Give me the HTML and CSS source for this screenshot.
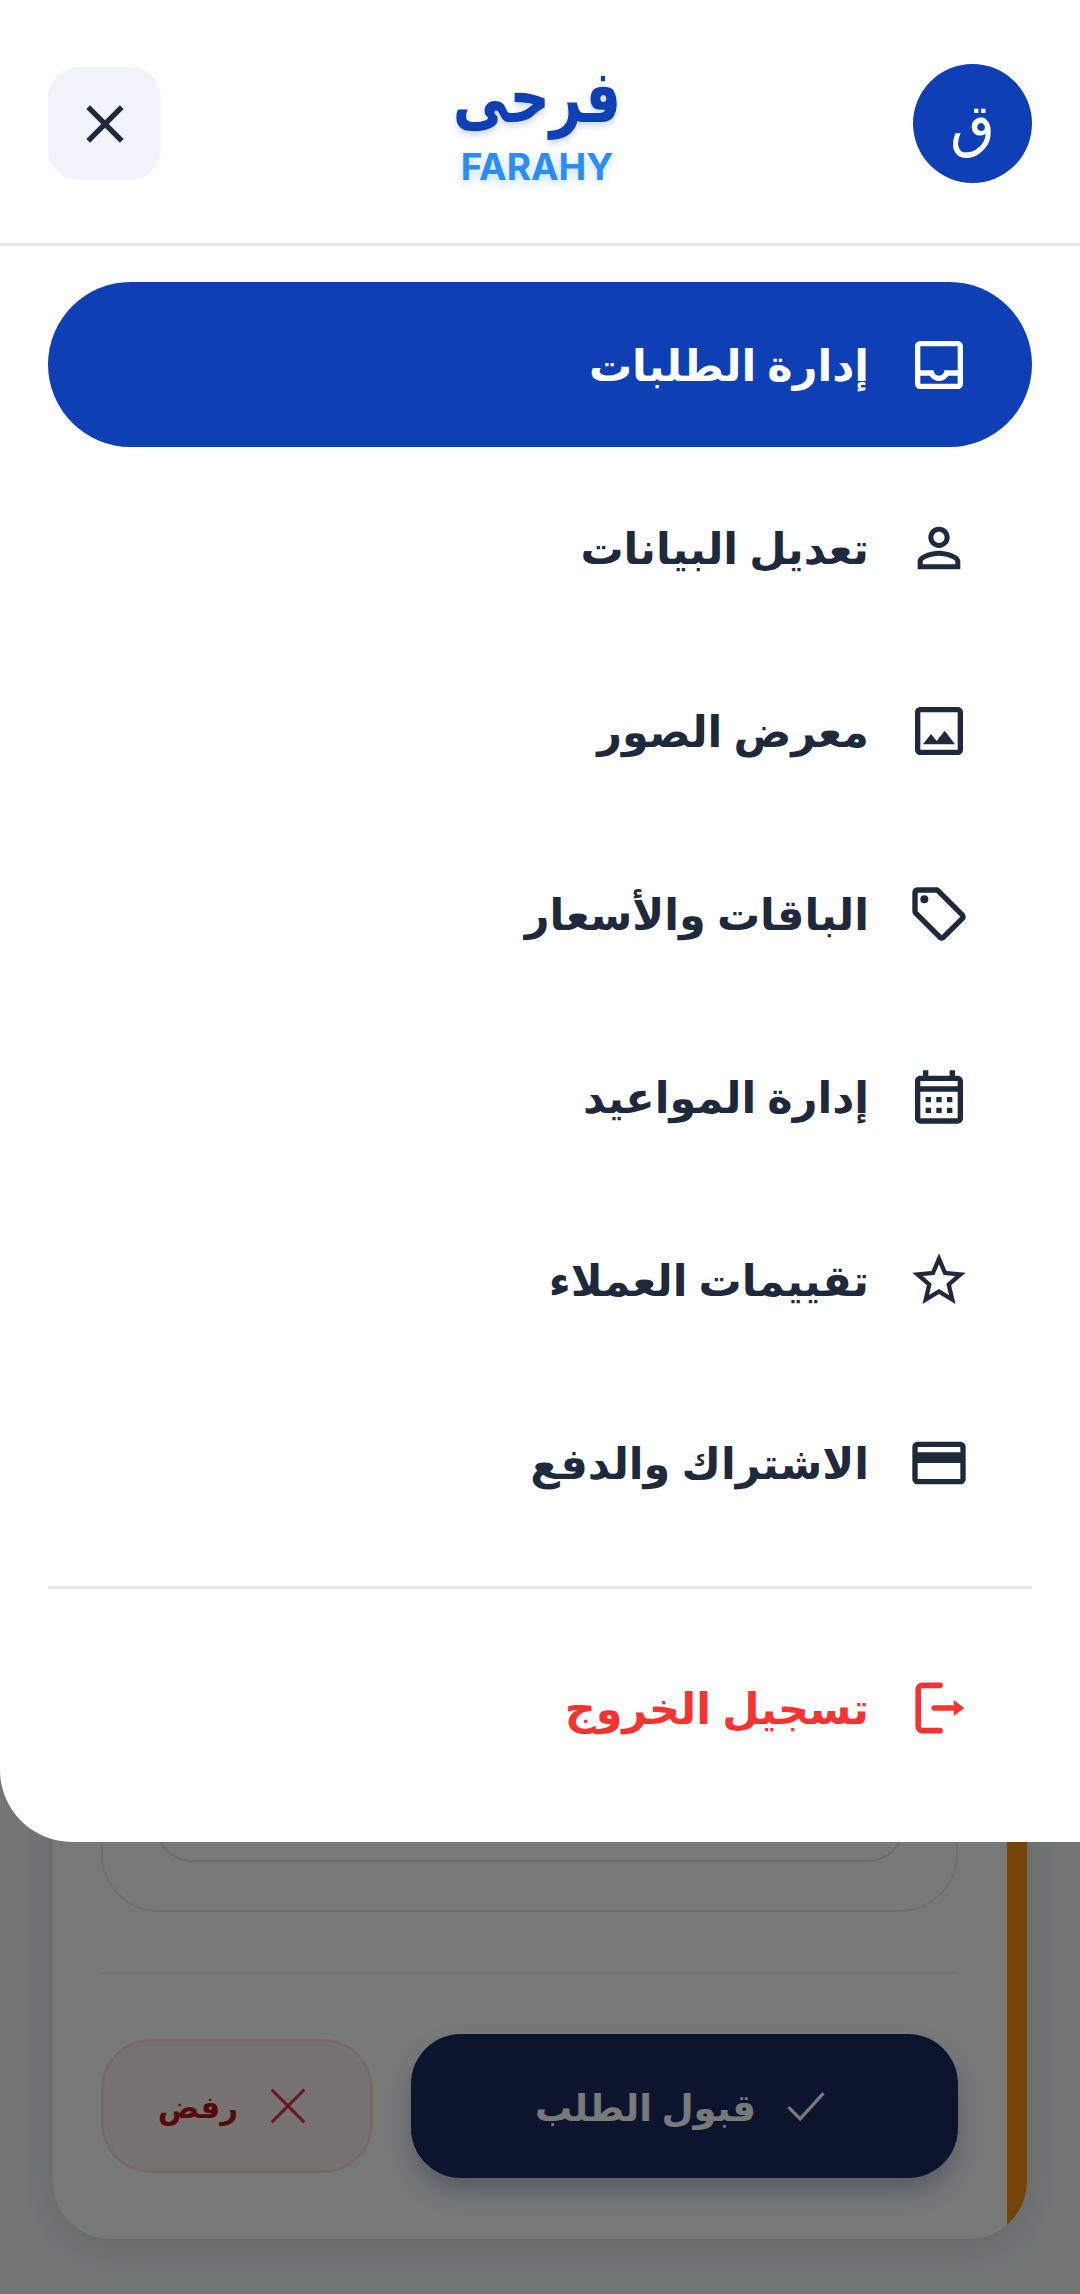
FILE: index.html
```html
<!DOCTYPE HTML>
<html lang="ar" dir="rtl">
<head>
  <title>فرحى</title>
  <meta content="text/html;charset=utf-8" http-equiv="Content-type"/>
  <meta name="viewport" content="width=device-width, initial-scale=1">
  <link rel="stylesheet" href="styles.css">
</head>
<body>
<!-- page behind the drawer -->
<main class="page">
  <section class="orderCard">
    <div class="cardStripe"></div>
    <div class="cardBody">
      <div class="detailsBox">
        <div class="detailsInner"></div>
      </div>
      <hr class="cardDivider">
      <div class="actions">
        <button class="acceptBtn">
          <svg class="btnIcon" viewBox="0 0 24 24"><path d="M4.5 12.5l5 5L19.5 6.5"/></svg>
          <span>قبول الطلب</span>
        </button>
        <button class="rejectBtn">
          <svg class="btnIcon" viewBox="0 0 24 24"><path d="M5 5l14 14M19 5L5 19"/></svg>
          <span>رفض</span>
        </button>
      </div>
    </div>
  </section>
</main>
<div class="backdrop"></div>

<!-- drawer -->
<nav class="drawer">
  <header class="drawerHead">
    <div class="avatar">ق</div>
    <div class="logo">
      <div class="logoAr">فرحى</div>
      <div class="logoEn">FARAHY</div>
    </div>
    <button class="closeBtn">
      <svg class="icon" viewBox="0 0 24 24"><path d="M19 6.41L17.59 5 12 10.59 6.41 5 5 6.41 10.59 12 5 17.59 6.41 19 12 13.41 17.59 19 19 17.59 13.41 12z"/></svg>
    </button>
  </header>
  <div class="menu">
    <a class="menuItem active">
      <svg class="icon" viewBox="0 0 24 24"><path d="M19 3H5c-1.1 0-2 .9-2 2v14c0 1.1.9 2 2 2h14c1.1 0 2-.9 2-2V5c0-1.1-.9-2-2-2zm0 16H5v-3h3.56c.69 1.19 1.97 2 3.45 2s2.75-.81 3.45-2H19v3zm0-5h-4.99c0 1.1-.9 2-2 2s-2-.9-2-2H5V5h14v9z"/></svg>
      <span>إدارة الطلبات</span>
    </a>
    <a class="menuItem">
      <svg class="icon" viewBox="0 0 24 24"><path d="M12 5.9c1.16 0 2.1.94 2.1 2.1s-.94 2.1-2.1 2.1S9.9 9.16 9.9 8s.94-2.1 2.1-2.1m0 9c2.97 0 6.1 1.46 6.1 2.1v1.1H5.9V17c0-.64 3.13-2.1 6.1-2.1M12 4C9.79 4 8 5.79 8 8s1.79 4 4 4 4-1.79 4-4-1.79-4-4-4zm0 9c-2.67 0-8 1.34-8 4v3h16v-3c0-2.66-5.33-4-8-4z"/></svg>
      <span>تعديل البيانات</span>
    </a>
    <a class="menuItem">
      <svg class="icon" viewBox="0 0 24 24"><path d="M19 5v14H5V5h14m0-2H5c-1.1 0-2 .9-2 2v14c0 1.1.9 2 2 2h14c1.1 0 2-.9 2-2V5c0-1.1-.9-2-2-2zm-4.86 8.86l-3 3.87L9 13.14 6 17h12l-3.86-5.14z"/></svg>
      <span>معرض الصور</span>
    </a>
    <a class="menuItem">
      <svg class="icon" viewBox="0 0 24 24"><path d="M21.41 11.58l-9-9C12.05 2.22 11.55 2 11 2H4c-1.1 0-2 .9-2 2v7c0 .55.22 1.05.59 1.42l9 9c.36.36.86.58 1.41.58s1.05-.22 1.41-.59l7-7c.37-.36.59-.86.59-1.41s-.23-1.06-.59-1.42zM13 20.01L4 11V4h7v-.01l9 9-7 7.02z"/><circle cx="6.5" cy="6.5" r="1.5"/></svg>
      <span>الباقات والأسعار</span>
    </a>
    <a class="menuItem">
      <svg class="icon" viewBox="0 0 24 24"><path d="M19 4h-1V2h-2v2H8V2H6v2H5c-1.11 0-1.99.9-1.99 2L3 20c0 1.1.89 2 2 2h14c1.1 0 2-.9 2-2V6c0-1.1-.9-2-2-2zm0 16H5V10h14v10zm0-12H5V6h14v2zM9 14H7v-2h2v2zm4 0h-2v-2h2v2zm4 0h-2v-2h2v2zm-8 4H7v-2h2v2zm4 0h-2v-2h2v2zm4 0h-2v-2h2v2z"/></svg>
      <span>إدارة المواعيد</span>
    </a>
    <a class="menuItem">
      <svg class="icon" viewBox="0 0 24 24"><path d="M22 9.24l-7.19-.62L12 2 9.19 8.63 2 9.24l5.46 4.73L5.82 21 12 17.27 18.18 21l-1.63-7.03L22 9.24zM12 15.4l-3.76 2.27 1-4.28-3.32-2.88 4.38-.38L12 6.1l1.71 4.04 4.38.38-3.32 2.88 1 4.28L12 15.4z"/></svg>
      <span>تقييمات العملاء</span>
    </a>
    <a class="menuItem">
      <svg class="icon" viewBox="0 0 24 24"><path d="M20 4H4c-1.11 0-1.99.89-1.99 2L2 18c0 1.11.89 2 2 2h16c1.11 0 2-.89 2-2V6c0-1.11-.89-2-2-2zm0 14H4v-6h16v6zm0-10H4V6h16v2z"/></svg>
      <span>الاشتراك والدفع</span>
    </a>
  </div>
  <hr class="menuDivider">
  <a class="menuItem logout">
    <svg class="icon" viewBox="0 0 24 24"><path class="logoutLine" d="M12.4 3.5H5.8a1.6 1.6 0 0 0-1.6 1.6v13.8a1.6 1.6 0 0 0 1.6 1.6h6.6M10.2 12h7"/><path d="M17.5 9l4 3-4 3z"/></svg>
    <span>تسجيل الخروج</span>
  </a>
</nav>
</body>
</html>
```

FILE: styles.css
```css
* {
    box-sizing: border-box;
}

html, body {
    height: 100%;
}

body {
    margin: 0;
    position: relative;
    overflow: hidden;
    background-color: #f6f7f7;
    color: #1e293b;
    font-family: 'Noto Sans', 'DejaVu Sans', sans-serif;
}

button {
    font-family: inherit;
    border: none;
}

svg {
    flex: none;
    display: block;
}

/* page behind the drawer */
.page {
    height: 100%;
    display: flex;
    flex-direction: column;
    justify-content: flex-end;
    padding: 0 53px 55px;
}

.orderCard {
    height: 720px;
    display: flex;
    overflow: hidden;
    background: #fff;
    border-radius: 58px;
    box-shadow: 0 8px 40px rgba(0, 0, 0, .14);
}

.cardStripe {
    flex: none;
    width: 20px;
    background: #f58a00;
}

.cardBody {
    flex: 1;
    display: flex;
    flex-direction: column;
    padding: 0 49px 61px 48px;
}

.detailsBox {
    flex: 1;
    display: flex;
    align-items: flex-end;
    padding: 0 52px 48px 53px;
    border: 2px solid #e8eaed;
    border-radius: 58px;
}

.detailsInner {
    width: 100%;
    height: 200px;
    border: 2px solid #e0e2e6;
    border-radius: 36px;
}

.cardDivider {
    width: 100%;
    height: 2px;
    margin: 60px 0;
    border: none;
    background: #eef0f2;
}

.actions {
    display: flex;
    align-items: center;
    gap: 38px;
}

.acceptBtn,
.rejectBtn {
    display: flex;
    align-items: center;
    justify-content: center;
    gap: 22px;
    font-weight: bold;
}

.acceptBtn {
    flex: 1;
    height: 144px;
    border-radius: 50px;
    background: #131e58;
    color: #fff;
    font-size: 37px;
    box-shadow: 0 14px 26px rgba(19, 30, 88, .3);
}

.rejectBtn {
    width: 272px;
    height: 134px;
    border: 3px solid #fddada;
    border-radius: 50px;
    background: #fef0f0;
    color: #b00a10;
    font-size: 31px;
}

.btnIcon {
    width: 56px;
    height: 56px;
    fill: none;
    stroke: currentColor;
    stroke-width: 1.4;
}

.rejectBtn .btnIcon {
    color: #d83038;
}

.backdrop {
    position: absolute;
    inset: 0;
    background: rgba(10, 12, 12, .55);
}

/* drawer */
.drawer {
    position: absolute;
    top: 0;
    left: 0;
    width: 100%;
    height: 1842px;
    padding-top: 38px;
    background: #fff;
    border-bottom-left-radius: 72px;
}

.drawerHead {
    height: 208px;
    display: flex;
    align-items: flex-start;
    justify-content: space-between;
    padding: 26px 48px 0;
    border-bottom: 3px solid #e2e8ed;
}

.avatar {
    width: 119px;
    height: 119px;
    display: flex;
    align-items: center;
    justify-content: center;
    border-radius: 50%;
    background: #0f3fb4;
    color: #fff;
    font-size: 58px;
}

.logo {
    text-align: center;
    margin-top: 8px;
}

/* the wordmark is a tall, square face; stretch to get close */
.logoAr {
    color: #0f3fb4;
    font-family: 'DejaVu Sans', sans-serif;
    font-size: 56px;
    font-weight: bold;
    line-height: 72px;
    transform: scaleY(1.3);
    transform-origin: center bottom;
    text-shadow: 0 3px 6px rgba(15, 63, 180, .2);
}

.logoEn {
    color: #2a8cf5;
    font-family: Inter, sans-serif;
    font-size: 37px;
    font-weight: 700;
    line-height: 46px;
    text-shadow: 0 4px 8px rgba(42, 140, 245, .3);
}

.closeBtn {
    width: 113px;
    height: 113px;
    margin-top: 3px;
    display: flex;
    align-items: center;
    justify-content: center;
    border-radius: 30px;
    background: #f0f4fa;
    color: #1e293b;
}

.icon {
    width: 64px;
    height: 64px;
    fill: currentColor;
}

.menu {
    display: flex;
    flex-direction: column;
    gap: 18px;
    padding: 36px 48px 0;
}

.menuItem {
    height: 165px;
    display: flex;
    align-items: center;
    gap: 38px;
    padding: 0 61px;
    border-radius: 83px;
    color: #1e293b;
    font-size: 43px;
    font-weight: bold;
}

.menuItem.active {
    background: #0f3fb4;
    color: #fff;
}

.menuDivider {
    height: 3px;
    margin: 41px 48px 36px;
    border: none;
    background: #e2e8ed;
}

.logout {
    margin: 0 48px;
    color: #f53333;
}

.logoutLine {
    fill: none;
    stroke: currentColor;
    stroke-width: 2.1;
    stroke-linecap: round;
}
```
